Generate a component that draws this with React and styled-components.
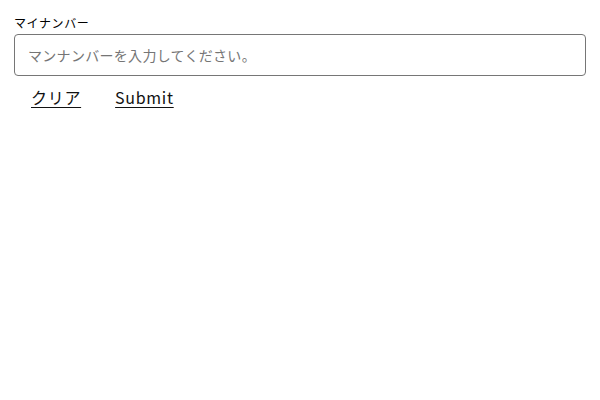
import styled, { createGlobalStyle } from "styled-components"

const Global = createGlobalStyle`
    body {
        margin: 0;
        background: #fff;
        font-family: "Noto Sans CJK JP", sans-serif;
        color: #000;
    }
`

const Form = styled.form`
    display: flex;
    flex-direction: column;
    padding: 14px 14px;
`

const Label = styled.label`
    font-size: 12px;
    line-height: 18px;
    letter-spacing: 0.6px;
    margin-bottom: 2px;
`

const Input = styled.input`
    box-sizing: border-box;
    width: 100%;
    height: 42px;
    border: 1px solid #767676;
    border-radius: 4px;
    padding: 0 13px;
    font-family: inherit;
    font-size: 14px;
    letter-spacing: 0.3px;
    color: #000;
    outline: none;

    &::placeholder {
        color: #757575;
    }
`

const Actions = styled.div`
    display: flex;
    margin-top: 8px;
`

const TextButton = styled.button`
    background: none;
    border: none;
    padding: 0 17px 0 17px;
    font-family: inherit;
    font-size: 16px;
    line-height: 26px;
    letter-spacing: 0.7px;
    color: #111;
    text-decoration: underline;
    text-underline-offset: 3px;
    cursor: pointer;
`

export default function App() {
    return (
        <>
            <Global />
            <Form onSubmit={e => e.preventDefault()}>
                <Label htmlFor="mynumber">マイナンバー</Label>
                <Input id="mynumber" placeholder="マンナンバーを入力してください。" />
                <Actions>
                    <TextButton type="reset">クリア</TextButton>
                    <TextButton type="submit">Submit</TextButton>
                </Actions>
            </Form>
        </>
    )
}
